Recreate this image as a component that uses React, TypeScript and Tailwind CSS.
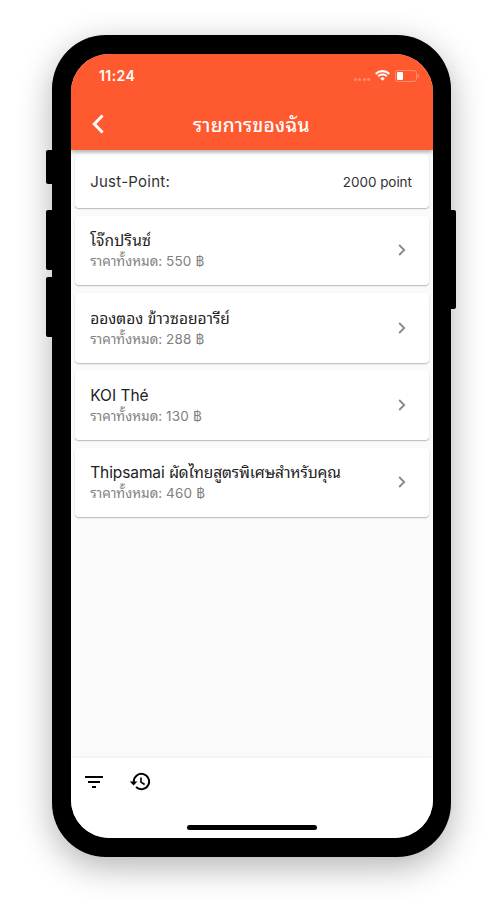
import type { ReactNode } from 'react';

const cardClass =
  'mx-[3.6px] rounded-[4px] bg-white shadow-[0_1px_1px_rgba(0,0,0,0.16),0_1px_2px_rgba(0,0,0,0.12)]';

function StatusBar() {
  return (
    <div className="flex h-[43px] items-center justify-between pr-[14px] pl-[28px] text-white">
      <span className="text-[14px] leading-[16px] font-semibold tracking-[0.4px]">11:24</span>
      <div className="flex items-center">
        <div className="mt-[7px] mr-[5px] flex gap-[1.5px]">
          {[0, 1, 2, 3].map((n) => (
            <i key={n} className="size-[3px] rounded-full bg-white/30" />
          ))}
        </div>
        <svg className="mr-[5px] h-[11px] w-[15px]" viewBox="0 0 15 11" fill="none" stroke="white">
          <path d="M.8 3.9a9.5 9.5 0 0 1 13.4 0" strokeWidth="2.2" />
          <path d="M3.2 6.3a6.1 6.1 0 0 1 8.6 0" strokeWidth="2" />
          <path d="M5.2 8.4a3.3 3.3 0 0 1 4.6 0L7.5 10.8Z" fill="white" stroke="none" />
        </svg>
        <svg className="h-[12px] w-[24px]" viewBox="0 0 24 12" fill="none">
          <rect x=".5" y=".5" width="21" height="11" rx="2.5" stroke="white" strokeOpacity=".3" />
          <rect x="2" y="2" width="6" height="8" rx="1" fill="white" />
          <path d="M22.7 4v4c1.5-.5 1.5-3.5 0-4Z" fill="white" fillOpacity=".4" />
        </svg>
      </div>
    </div>
  );
}

function Header() {
  return (
    <header className="relative z-10 h-[96.4px] shrink-0 bg-[#ff5930] shadow-[0_2px_4px_rgba(0,0,0,0.32)]">
      <StatusBar />
      <div className="flex h-[54px] items-center">
        <svg className="mt-[-1px] ml-[20px] h-[20px] w-[14px]" viewBox="0 0 14 20" fill="none" stroke="white" strokeWidth="3">
          <path d="M11.6 1.5 3.3 10l8.3 8.5" />
        </svg>
        <h1 className="mt-[4px] ml-[88px] text-[19px] leading-[28px] font-medium tracking-[0.25px] whitespace-nowrap text-white">
          รายการของฉัน
        </h1>
      </div>
    </header>
  );
}

function Order({ name, total }: { name: ReactNode; total: number }) {
  return (
    <article className={`${cardClass} flex h-[69.6px] items-center justify-between pr-[23.5px] pl-[15.6px]`}>
      <div className="pt-px whitespace-nowrap">
        <h2 className="text-[15.5px] leading-[21px] text-[#222]">{name}</h2>
        <p className="text-[13.5px] leading-[20px] text-[#808080]">
          ราคาทั้งหมด: <span className="tracking-[0.2px]">{total} ฿</span>
        </p>
      </div>
      <svg className="h-[12px] w-[8px]" viewBox="0 0 8 12" fill="none" stroke="#888" strokeWidth="1.8">
        <path d="m1.2 1 5 5-5 5" />
      </svg>
    </article>
  );
}

export default function App() {
  return (
    <div className="relative h-[908px] w-[503px] overflow-hidden bg-white pt-[35px] pl-[52px] font-['Inter','Noto_Sans_Thai_Looped','Loma','Noto_Sans_Thai',sans-serif]">
      <i className="absolute top-[150px] left-[46px] h-[34px] w-[10px] rounded-[2px] bg-black" />
      <i className="absolute top-[210px] left-[46px] h-[60px] w-[10px] rounded-[2px] bg-black" />
      <i className="absolute top-[277px] left-[46px] h-[60px] w-[10px] rounded-[2px] bg-black" />
      <i className="absolute top-[210px] left-[446px] h-[99px] w-[10px] rounded-[2px] bg-black" />
      <div className="relative h-[822px] w-[399px] rounded-[54px] bg-black pt-[19px] pl-[19px] shadow-[0_10px_34px_rgba(0,0,0,0.3)]">
        <main className="flex h-[784px] w-[362px] flex-col overflow-hidden rounded-[38px] bg-[#fafafa]">
          <Header />
          <section className="flex grow flex-col gap-[7.7px] pt-[3.6px]">
            <div className={`${cardClass} flex h-[54px] items-center justify-between pr-[17.5px] pl-[15.6px] pt-[2px] text-[#333]`}>
              <span className="text-[15px] tracking-[0.25px]">Just-Point:</span>
              <span className="text-[13.5px] tracking-[-0.05px]">2000 point</span>
            </div>
            <Order name={<span className="tracking-[0.25px]">โจ๊กปรินซ์</span>} total={550} />
            <Order name="อองตอง ข้าวซอยอารีย์" total={288} />
            <Order name="KOI Thé" total={130} />
            <Order name={<span className="tracking-[-0.1px]">Thipsamai ผัดไทยสูตรพิเศษสำหรับคุณ</span>} total={460} />
          </section>
          <footer className="flex h-[80px] shrink-0 flex-col items-center bg-white shadow-[0_-1px_2px_rgba(0,0,0,0.05)]">
            <nav className="flex w-full items-center gap-[26px] pt-[12px] pl-[11px]">
              <svg className="size-[24px]" viewBox="0 0 24 24">
                <path d="M10 18h4v-2h-4v2zM3 6v2h18V6H3zm3 7h12v-2H6v2z" />
              </svg>
              <svg className="mt-[-1px] ml-[-3px] size-[23px]" viewBox="0 0 24 24" fill="none" stroke="black" strokeWidth="2">
                <path d="M5 13v-1a8 8 0 1 1 2.4 5.7" />
                <path d="M12.5 7.8v4.8l3.8 2.5" strokeWidth="1.7" />
                <path d="M.8 12h8l-4 4.2Z" fill="black" stroke="none" />
              </svg>
            </nav>
            <div className="mt-auto mb-[8px] h-[5px] w-[130px] rounded-full bg-black" />
          </footer>
        </main>
        <svg className="absolute top-[18px] left-[93px] h-[30px] w-[214px]" viewBox="0 0 214 30">
          <path d="M2 0v1C5 1 6 3 6 6v2c0 13 9 21 22 21h158c13 0 22-8 22-21V6c0-3 1-5 4-5V0Z" />
        </svg>
      </div>
    </div>
  );
}
